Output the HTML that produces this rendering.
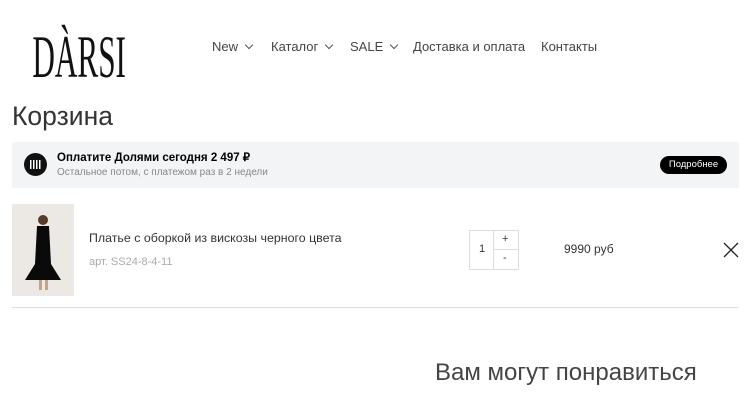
<!DOCTYPE html>
<html><head><meta charset="utf-8"><style>
body{margin:0;width:752px;height:400px;overflow:hidden;background:#fff;font-family:"Liberation Sans",sans-serif;color:#333;position:relative}
.a{position:absolute;white-space:nowrap}
.nav{top:39px;font-size:13px;color:#444}
.nav span.c{display:inline-block;width:5px;height:5px;border-right:1.2px solid #555;border-bottom:1.2px solid #555;transform:rotate(45deg);margin-left:8px;position:relative;top:-3px}
</style></head><body>
<svg class="a" style="left:30px;top:16px" width="104" height="66">
<text x="3" y="61" font-family="Liberation Serif" font-size="60" fill="#111" transform="scale(0.78,1)" textLength="120" lengthAdjust="spacingAndGlyphs">DÀRSI</text>
</svg>
<div class="a nav" style="left:212px">New<span class="c"></span></div>
<div class="a nav" style="left:271px">Каталог<span class="c"></span></div>
<div class="a nav" style="left:350px">SALE<span class="c"></span></div>
<div class="a nav" style="left:413px">Доставка и оплата</div>
<div class="a nav" style="left:541px">Контакты</div>
<div class="a" style="left:12px;top:101px;font-size:26.5px;color:#333">Корзина</div>
<div class="a" style="left:12px;top:142px;width:727px;height:46px;background:#f3f4f6"></div>
<div class="a" style="left:24px;top:153px;width:23px;height:23px;border-radius:50%;background:#111"></div>
<div class="a" style="left:30px;top:160px;width:11px;height:9px;background:repeating-linear-gradient(90deg,#fff 0 1.5px,transparent 1.5px 3px)"></div>
<div class="a" style="left:57px;top:150px;font-size:11.5px;font-weight:bold;color:#000">Оплатите Долями сегодня 2 497 ₽</div>
<div class="a" style="left:57px;top:167px;font-size:10px;color:#888">Остальное потом, с платежом раз в 2 недели</div>
<div class="a" style="left:660px;top:156px;width:67px;height:18px;border-radius:9px;background:#000;color:#fff;font-size:9.5px;line-height:18px;text-align:center">Подробнее</div>
<svg class="a" style="left:12px;top:204px" width="62" height="92">
<rect width="62" height="92" fill="#ece9e4"/>
<circle cx="31" cy="16" r="5" fill="#5a3a28"/>
<path d="M25 22 L37 22 L39 60 L49 76 L13 76 L23 60 Z" fill="#0a0a0a"/>
<rect x="27" y="76" width="3" height="10" fill="#c9a27e"/><rect x="33" y="76" width="3" height="10" fill="#c9a27e"/>
</svg>
<div class="a" style="left:89px;top:231px;font-size:12.4px;color:#333">Платье с оборкой из вискозы черного цвета</div>
<div class="a" style="left:89px;top:256px;font-size:11px;color:#aaa">арт. SS24-8-4-11</div>
<div class="a" style="left:469px;top:230px;width:48px;height:38px;border:1px solid #ddd"></div>
<div class="a" style="left:493px;top:230px;width:1px;height:40px;background:#ddd"></div>
<div class="a" style="left:493px;top:249px;width:25px;height:1px;background:#ddd"></div>
<div class="a" style="left:479px;top:243px;font-size:11px">1</div>
<div class="a" style="left:502px;top:233px;font-size:11px">+</div>
<div class="a" style="left:503px;top:252px;font-size:11px">-</div>
<div class="a" style="left:564px;top:242px;font-size:12px">9990 руб</div>
<svg class="a" style="left:723px;top:242px" width="16" height="16"><path d="M1 1L15 15M15 1L1 15" stroke="#222" stroke-width="1.3"/></svg>
<div class="a" style="left:12px;top:307px;width:727px;height:1px;background:#ddd"></div>
<div class="a" style="left:435px;top:359px;font-size:24px;color:#444">Вам могут понравиться</div>
</body></html>
